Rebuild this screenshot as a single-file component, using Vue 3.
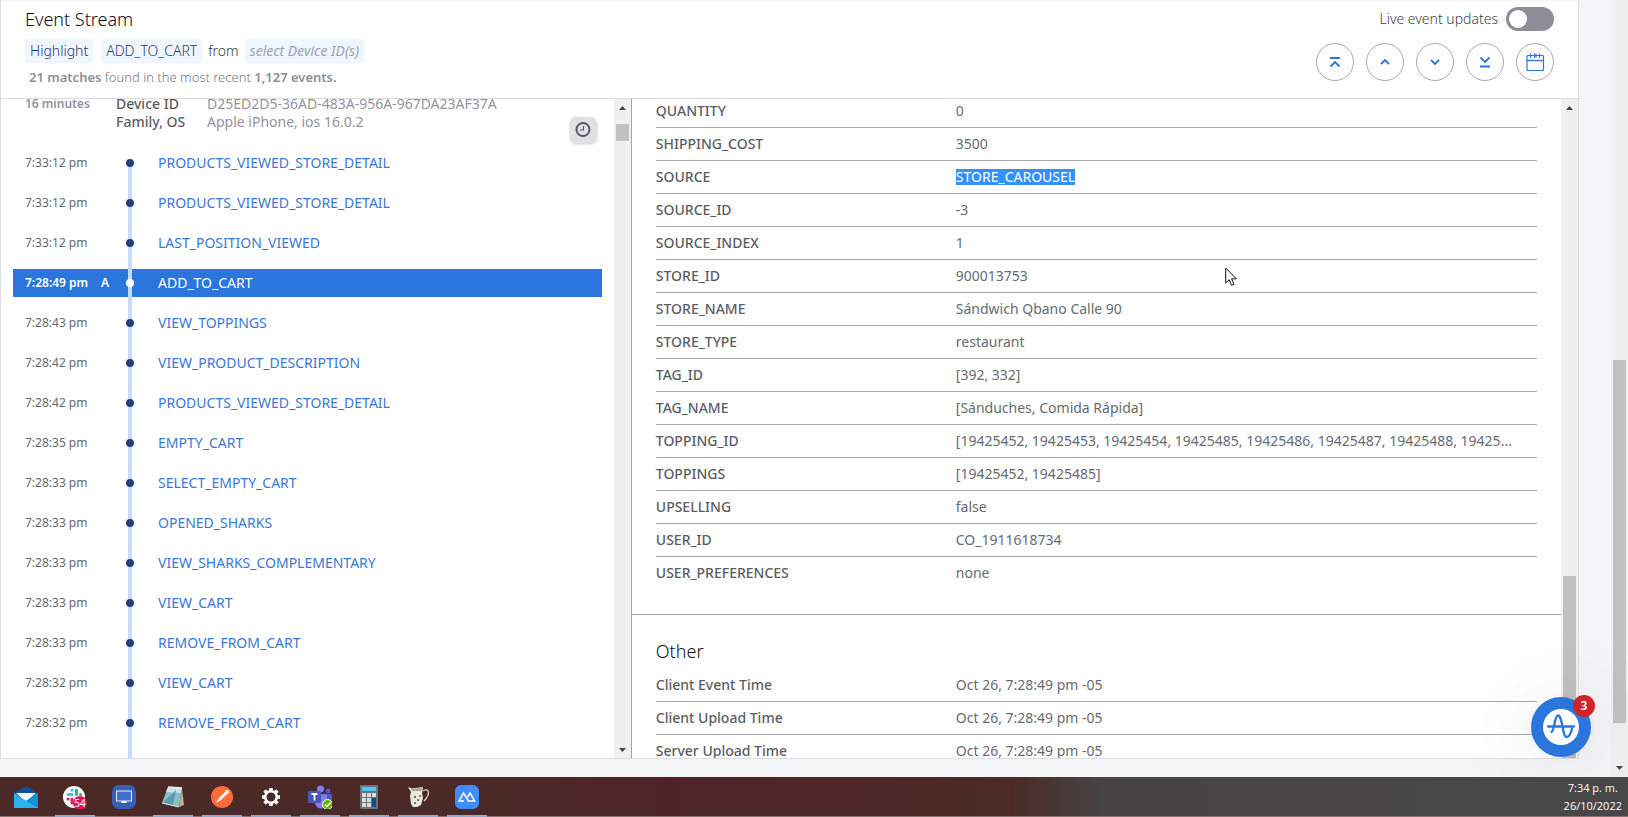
<script setup>
const events = [
  ['7:33:12 pm', 'PRODUCTS_VIEWED_STORE_DETAIL'],
  ['7:33:12 pm', 'PRODUCTS_VIEWED_STORE_DETAIL'],
  ['7:33:12 pm', 'LAST_POSITION_VIEWED'],
  ['7:28:49 pm', 'ADD_TO_CART', 'A'],
  ['7:28:43 pm', 'VIEW_TOPPINGS'],
  ['7:28:42 pm', 'VIEW_PRODUCT_DESCRIPTION'],
  ['7:28:42 pm', 'PRODUCTS_VIEWED_STORE_DETAIL'],
  ['7:28:35 pm', 'EMPTY_CART'],
  ['7:28:33 pm', 'SELECT_EMPTY_CART'],
  ['7:28:33 pm', 'OPENED_SHARKS'],
  ['7:28:33 pm', 'VIEW_SHARKS_COMPLEMENTARY'],
  ['7:28:33 pm', 'VIEW_CART'],
  ['7:28:33 pm', 'REMOVE_FROM_CART'],
  ['7:28:32 pm', 'VIEW_CART'],
  ['7:28:32 pm', 'REMOVE_FROM_CART'],
]

const properties = [
  ['QUANTITY', '0'],
  ['SHIPPING_COST', '3500'],
  ['SOURCE', 'STORE_CAROUSEL'],
  ['SOURCE_ID', '-3'],
  ['SOURCE_INDEX', '1'],
  ['STORE_ID', '900013753'],
  ['STORE_NAME', 'Sándwich Qbano Calle 90'],
  ['STORE_TYPE', 'restaurant'],
  ['TAG_ID', '[392, 332]'],
  ['TAG_NAME', '[Sánduches, Comida Rápida]'],
  ['TOPPING_ID', '[19425452, 19425453, 19425454, 19425485, 19425486, 19425487, 19425488, 19425...'],
  ['TOPPINGS', '[19425452, 19425485]'],
  ['UPSELLING', 'false'],
  ['USER_ID', 'CO_1911618734'],
  ['USER_PREFERENCES', 'none'],
]

const other = [
  ['Client Event Time', 'Oct 26, 7:28:49 pm -05'],
  ['Client Upload Time', 'Oct 26, 7:28:49 pm -05'],
  ['Server Upload Time', 'Oct 26, 7:28:49 pm -05'],
]

const navButtons = [
  ['Jump to first match', 'M14 15h10M14.5 23.5l4.5-4.5 4.5 4.5'],
  ['Previous match', 'M15 21l4-4 4 4'],
  ['Next match', 'M15 17l4 4 4-4'],
  ['Jump to last match', 'M14.5 14.5l4.5 4.5 4.5-4.5M14 23.5h10'],
]
</script>

<template>
  <div class="desktop">
    <div class="page">
      <main class="panel">
        <header class="head">
          <div class="head-left">
            <h1>Event Stream</h1>
            <div class="query">
              <button class="chip action">Highlight</button>
              <button class="chip">ADD_TO_CART</button>
              <span class="from">from</span>
              <button class="chip empty">select Device ID(s)</button>
            </div>
            <p class="matches"><b>21 matches</b> found in the most recent <b>1,127 events.</b></p>
          </div>
          <div class="head-right">
            <label class="live">Live event updates<input type="checkbox" role="switch" /></label>
            <div class="nav">
              <button v-for="[label, d] in navButtons" :key="label" class="round" :aria-label="label">
                <svg viewBox="0 0 38 38"><path :d="d" stroke-width="1.8" /></svg>
              </button>
              <button class="round" aria-label="Pick a date">
                <svg viewBox="0 0 38 38">
                  <rect x="11" y="12.500" width="16.500" height="15" rx="1" stroke-width="1.2" />
                  <path d="M11 17.500h16.500" stroke-width="1.400" />
                  <path d="M14.500 10.500v4.500M18.500 10.500v4.500M20 10.500v4.500M23.500 10.500v4.500" stroke-width="1.1" />
                </svg>
              </button>
            </div>
          </div>
        </header>

        <div class="panes">
          <section class="stream">
            <div class="stream-content">
              <div class="session">
                <b>16 minutes</b>
                <dl>
                  <dt>Device ID</dt><dd>D25ED2D5-36AD-483A-956A-967DA23AF37A</dd>
                  <dt>Family, OS</dt><dd>Apple iPhone, ios 16.0.2</dd>
                </dl>
              </div>
              <ul class="events">
                <li v-for="([time, name, tag], i) in events" :key="i">
                  <a href="#" :class="{ selected: tag }">
                    <time>{{ time }}</time>
                    <span class="tag">{{ tag }}</span>
                    <span class="dot"></span>
                    <span class="name">{{ name }}</span>
                  </a>
                </li>
              </ul>
              <button class="clock" aria-label="Time display">
                <svg viewBox="0 0 26 26"><circle cx="13" cy="12.500" r="6.500" stroke-width="2" /><path d="M13.500 9v4h-3.500" stroke-width="1.2" /></svg>
              </button>
            </div>
            <div class="scroll stream-scroll">
              <svg class="arrow" viewBox="0 0 17 17"><path d="M5 11l3.500-4L12 11z" /></svg>
              <div class="thumb"></div>
              <svg class="arrow end" viewBox="0 0 17 17"><path d="M5 7l3.500 4L12 7z" /></svg>
            </div>
          </section>

          <section class="details">
            <div class="details-content">
              <div class="group first">
                <table>
                  <tbody>
                    <tr v-for="[key, value] in properties" :key="key">
                      <th scope="row">{{ key }}</th>
                      <td><mark v-if="key === 'SOURCE'">{{ value }}</mark><template v-else>{{ value }}</template></td>
                    </tr>
                  </tbody>
                </table>
              </div>
              <div class="group">
                <h2>Other</h2>
                <table>
                  <tbody>
                    <tr v-for="[key, value] in other" :key="key">
                      <th scope="row">{{ key }}</th>
                      <td>{{ value }}</td>
                    </tr>
                  </tbody>
                </table>
              </div>
            </div>
            <div class="scroll details-scroll">
              <svg class="arrow" viewBox="0 0 17 17"><path d="M5 11l3.500-4L12 11z" /></svg>
              <div class="thumb"></div>
            </div>
          </section>
        </div>
      </main>

      <div class="scroll page-scroll">
        <div class="thumb"></div>
        <svg class="arrow end" viewBox="0 0 17 17"><path d="M5 6l3.500 4L12 6z" /></svg>
      </div>

      <button class="help" aria-label="Help center, 3 notifications">
        <svg viewBox="0 0 60 60">
          <circle cx="30" cy="30" r="18" fill="#fff" />
          <path d="M17 29.500h26M20.500 35C23.500 34 23.500 18.500 27 18.500C31.500 18.500 31.500 40 35.500 40C38.500 40 40 36 41 32" fill="none" stroke="#2a76dd" stroke-width="2.300" stroke-linecap="round" />
        </svg>
        <span class="badge">3</span>
      </button>

      <svg class="pointer" viewBox="0 0 13 20">
        <path d="M.7 1v15l3.500-3.300 2.300 5.600 2.500-1-2.400-5.500h4.800z" fill="#fff" stroke="#111" />
      </svg>
    </div>

    <footer class="taskbar">
      <nav class="apps" aria-label="Taskbar">
        <button aria-label="Mail">
          <svg viewBox="0 0 24 24">
            <path d="M0 8l12-7 12 7v6H0z" fill="#0f4f9c" /><path d="M2 8h20l-10 9z" fill="#f4f8fc" />
            <path d="M0 8l12 8 12-8v15H0z" fill="#2bb1ee" /><path d="M24 8v15L9 14l3 2z" fill="#1590db" />
          </svg>
        </button>
        <button class="open" aria-label="Slack, 54 notifications">
          <svg viewBox="0 0 24 24">
            <circle cx="11" cy="12" r="11" fill="#fff" />
            <g stroke-width="3" stroke-linecap="round">
              <path d="M5 9.500h4M9 5v.2" stroke="#36c5f0" /><path d="M13.500 5v4.500M17.500 9.500h.2" stroke="#2eb67d" />
              <path d="M9 14v4M5 14h.2" stroke="#e01e5a" /><path d="M14 13.500h4" stroke="#ecb22e" />
            </g>
            <circle cx="17" cy="18" r="7" fill="#d8175d" />
            <text x="17" y="22" text-anchor="middle" font-size="10" fill="#fff">54</text>
          </svg>
        </button>
        <button aria-label="Remote desktop">
          <svg viewBox="0 0 24 24">
            <rect width="24" height="24" rx="7" fill="#365fb5" /><rect x="4.500" y="6" width="15" height="10" fill="#3f70c9" stroke="#e8f0fb" />
            <path d="M10 16h4l1 2H9z" fill="#fff" />
          </svg>
        </button>
        <button class="open" aria-label="Notepad">
          <svg viewBox="0 0 24 24">
            <path d="M21 4l2 16-5 2z" fill="#c4b18c" /><path d="M7 2l14 1-3 19L1 18z" fill="#8dbfca" />
            <path d="M7 2l14 1-1 5L5 7z" fill="#c9e3e7" /><path d="M1 18L15 5l-3 15.500z" fill="#5c9cab" />
            <path d="M7 2l14 1" stroke="#eee" stroke-width="1.500" />
            <path d="M1 18l17 4" stroke="#e4ecec" />
          </svg>
        </button>
        <button class="open" aria-label="Postman">
          <svg viewBox="0 0 24 24">
            <circle cx="12" cy="12" r="11" fill="#ff6c37" /><path d="M6 18l3-5 6-6 2 2-6 6z" fill="#fff" /><circle cx="17" cy="7" r="2" fill="#fff" />
          </svg>
        </button>
        <button class="open" aria-label="Settings">
          <svg viewBox="0 0 24 24" fill="none" stroke="#fff">
            <circle cx="12" cy="12" r="5.800" stroke-width="2.600" />
            <path d="M12 3v3M12 18v3M3 12h3M18 12h3M5.600 5.600l2.200 2.200M16.200 16.200l2.200 2.200M5.600 18.400l2.200-2.200M16.200 7.800l2.200-2.200" stroke-width="3.600" />
          </svg>
        </button>
        <button class="open" aria-label="Teams">
          <svg viewBox="0 0 24 24">
            <circle cx="12.500" cy="4" r="3.500" fill="#7b83eb" /><circle cx="20" cy="6" r="2.500" fill="#5059c9" />
            <path d="M16 9h8v7a4 4 0 0 1-6 3z" fill="#5059c9" /><path d="M7 9h12v8a6 6 0 0 1-12 1z" fill="#7b83eb" />
            <rect y="6" width="13" height="12" rx="1" fill="#4b53bc" /><path d="M3.500 9h6M6.500 9v6.500" stroke="#fff" stroke-width="1.800" />
            <circle cx="19.500" cy="19.500" r="5" fill="#6bb700" stroke="#fff" /><path d="M17 19.500l2 2 3.500-4" fill="none" stroke="#fff" stroke-width="1.400" />
          </svg>
        </button>
        <button class="open" aria-label="Calculator">
          <svg viewBox="0 0 24 24">
            <rect x="3" width="18" height="24" rx="1" fill="#6f7276" /><rect x="5" y="2" width="14" height="4" fill="#49cdec" />
            <path d="M5 8h4v4H5zM10 8h4v4h-4zM15 8h4v4h-4zM5 13h4v4H5zM10 13h4v4h-4zM5 18h4v4H5zM10 18h4v4h-4z" fill="#d9dde0" />
            <path d="M15 13h4v9h-4z" fill="#124c8f" />
          </svg>
        </button>
        <button class="open" aria-label="DBeaver">
          <svg viewBox="0 0 24 24">
            <path d="M17 6c6-4 8 3 1 10" fill="none" stroke="#d5d3cc" stroke-width="1.300" />
            <path d="M2 2l4 1.500L17 2l-1 6 1 5-2 7-4 2H7l-2-3-1-8 1-4z" fill="#e9e7df" /><path d="M5 4l11-1-1 3H6z" fill="#a9a398" />
            <path d="M8 11h2v2H8z" fill="#c04848" /><path d="M11 14h2v2h-2z" fill="#4f8a59" /><path d="M8 17h2v2H8z" fill="#4f8a59" /><path d="M13 10h2v2h-2z" fill="#c3763b" />
          </svg>
        </button>
        <button class="open" aria-label="Cloud app">
          <svg viewBox="0 0 24 24">
            <rect width="24" height="24" rx="6" fill="#418cfb" />
            <path d="M9 16H4L8.500 8l5 8h6L15 8l-2.500 4" fill="none" stroke="#fff" stroke-width="1.500" />
          </svg>
        </button>
      </nav>
      <div class="datetime"><span>7:34 p. m.</span><span>26/10/2022</span></div>
    </footer>
  </div>
</template>

<style>
body { overflow: hidden; }
</style>

<style scoped>
* { box-sizing: border-box; }
.desktop {
  display: flex; flex-direction: column; height: 100vh;
  font: 14px/18px "Noto Sans", "Open Sans", sans-serif; color: #5a5d62;
}
h1, h2, p, ul, dl, dd { margin: 0; padding: 0; }
button { font: inherit; border: 0; padding: 0; background: none; color: inherit; }
svg { display: block; }

.page { position: relative; flex: 1; min-height: 0; display: flex; background: #f3f5f7; }
.panel {
  flex: 1; min-width: 0; display: flex; flex-direction: column;
  margin: 0 32px 18px 0; background: #fff; border: 1px solid #dcdee0; border-top-color: #f3f4f6;
}

.head { display: flex; justify-content: space-between; padding: 6px 24px 10px; border-bottom: 1px solid #dcdde0; }
h1, h2 { font-size: 18px; line-height: 24px; font-weight: 300; color: #101114; }
.query { display: flex; align-items: center; gap: 6px; margin-top: 8px; }
.chip { height: 24px; padding: 0 5px; border-radius: 2px; background: #f0f6ff; color: #1c3a74; font-weight: 300; }
.chip.action { margin-right: 2px; }
.chip.empty { font-style: italic; font-weight: 400; color: #9ba3b2; }
.from { font-weight: 300; color: #33363b; }
.matches { margin: 4px 0 1px 4px; font-size: 13px; line-height: 20px; font-weight: 300; color: #75797f; }
.matches b { font-weight: 600; color: #8c9097; }
.head-right { display: flex; flex-direction: column; align-items: flex-end; gap: 12px; }
.live { display: flex; align-items: center; gap: 8px; font-weight: 300; color: #3c3f45; }
.live input {
  appearance: none; margin: 0; width: 48px; height: 24px; border-radius: 12px; background: #8b8e99;
  display: flex; align-items: center; padding: 3px;
}
.live input::before { content: ""; width: 18px; height: 18px; border-radius: 50%; background: #fff; }
.nav { display: flex; gap: 12px; }
.round { width: 38px; height: 38px; border: 1px solid #a6a8b0; border-radius: 50%; }
.round svg { width: 38px; height: 38px; margin: -1px; fill: none; stroke: #2a76dd; }

.panes { flex: 1; min-height: 0; display: grid; grid-template-columns: 40% 60%; }
.stream, .details { display: flex; min-width: 0; min-height: 0; overflow: hidden; }
.stream { border-right: 1px solid #a2a4aa; }
.stream-content { position: relative; flex: 1; min-width: 0; display: flex; flex-direction: column; }
.session { display: flex; margin-top: -4px; padding: 0 24px 12px; color: #92959d; }
.session b { width: 91px; font-size: 12px; font-weight: 600; }
dl { display: grid; grid-template-columns: 91px 1fr; }
dt { color: #5a5d62; font-weight: 500; }
.events { position: relative; flex: 1; list-style: none; }
.events::before { content: ""; position: absolute; z-index: 1; left: 127px; top: 20px; bottom: 0; width: 4px; background: #c6dafc; }
li { height: 40px; padding: 6px 12px; }
li a {
  display: grid; grid-template-columns: 76px 25px 8px 1fr; align-items: center;
  height: 28px; padding-left: 12px; color: #3a78d4; text-decoration: none;
}
time { font-size: 12px; color: #666970; }
.tag { font-size: 12px; font-weight: 600; }
.dot { position: relative; z-index: 1; width: 8px; height: 8px; border-radius: 50%; background: #233f7c; }
.name { padding-left: 24px; }
.selected { background: #2a76dd; color: #fff; }
.selected time { color: #fff; font-weight: 600; }
.selected .dot { background: #fff; }
.clock {
  position: absolute; right: 17px; top: 18px; width: 27px; height: 26px;
  border-radius: 6px; background: #e0e1e5; box-shadow: 0 1px 3px #0003;
}
.clock svg { width: 26px; height: 26px; fill: none; stroke: #555963; }

.details-content { flex: 1; min-width: 0; }
.group { padding: 24px 24px 0; }
.group.first { margin-top: -4px; padding: 0 24px 24px; border-bottom: 1px solid #a2a4aa; }
h2 { margin-bottom: 6px; }
table { width: 100%; table-layout: fixed; border-collapse: separate; border-spacing: 0; }
th, td { height: 33px; padding: 0; border-bottom: 1px solid #a6a8ad; white-space: nowrap; text-align: left; }
th { width: 300px; font-weight: 500; }
td { overflow: hidden; text-overflow: ellipsis; color: #686b70; }
.first tr:last-child > * { border-bottom-color: transparent; }
mark { display: inline-block; line-height: 16px; background: #3390ff; color: #fff; }

.scroll { width: 17px; flex: none; display: flex; flex-direction: column; background: #f0f0f0; }
.arrow { width: 17px; height: 17px; fill: #444; }
.end { margin-top: auto; }
.thumb { margin: 0 2px; background: #c1c1c1; }
.stream-scroll .thumb { height: 17px; margin-top: 8px; }
.details-scroll .thumb { flex: 1; margin-top: 460px; }
.page-scroll .thumb { height: 363px; margin-top: 360px; }

.help {
  position: absolute; right: 37px; bottom: 20px; width: 60px; height: 60px; border-radius: 50%;
  background: #2a76dd; box-shadow: 0 1px 6px #0001, 0 2px 90px #0002;
}
.badge {
  position: absolute; top: -2px; right: -4px; width: 22px; height: 22px; border-radius: 50%;
  background: #d1232a; color: #fff; font-size: 12px; line-height: 21px; font-weight: 600;
}
.pointer { position: absolute; left: 1225px; top: 267px; width: 13px; height: 20px; }

.taskbar {
  position: relative; flex: none; height: 40px; display: flex; justify-content: space-between;
  background: linear-gradient(90deg, #4a2926, #4a2926 30%, #4d2329 41%, #4d2728 52%, #4b2a27 62%, #474544 68%, #474747);
  border-bottom: 1px solid #847370;
}
.apps { display: flex; gap: 9px; padding-left: 6px; }
.apps button { width: 40px; height: 40px; padding: 8px; border-bottom: 2px solid transparent; }
.apps .open { border-bottom-color: #88aed5; }
.apps svg { width: 24px; height: 24px; }
.datetime {
  display: flex; flex-direction: column; padding: 2px 6px 0 0; text-align: center;
  font: 11px/18px "Open Sans", "Noto Sans", sans-serif; color: #fff;
}
</style>
